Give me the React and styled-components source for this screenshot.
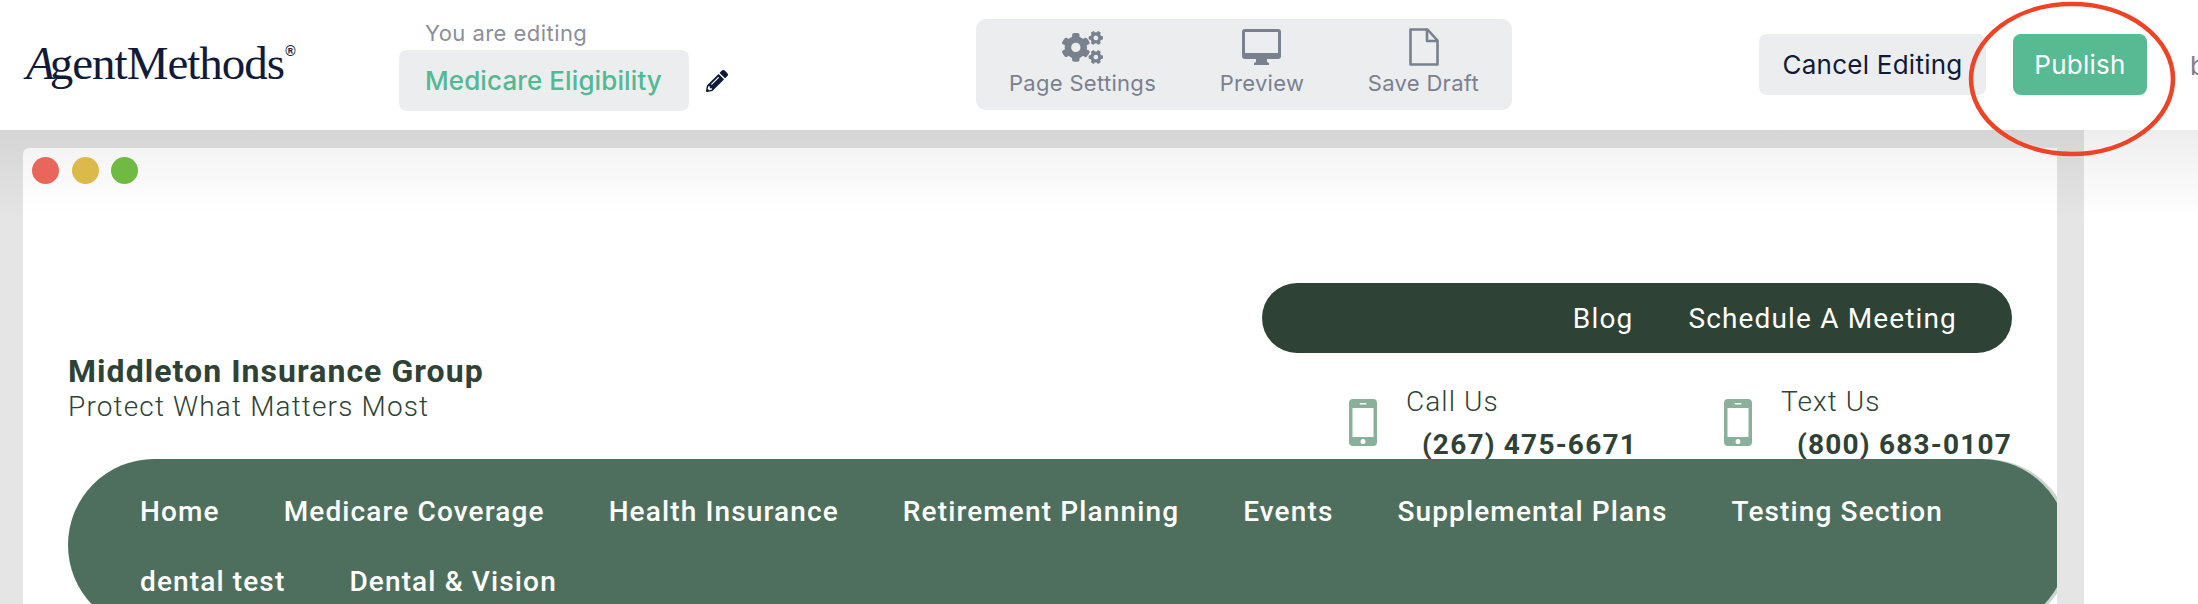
import React from 'react';
import styled, { createGlobalStyle } from 'styled-components';
import { FaCogs, FaPencilAlt } from 'react-icons/fa';

const GlobalStyle = createGlobalStyle`
  html, body {
    margin: 0;
    padding: 0;
    background: #fff;
  }
  * {
    box-sizing: border-box;
  }
`;

const Page = styled.div`
  position: relative;
  width: 2198px;
  height: 604px;
  overflow: hidden;
  font-family: Inter, 'Open Sans', sans-serif;
`;

const Header = styled.header`
  display: flex;
  align-items: center;
  height: 130px;
  padding-left: 26px;
  background: #fff;
  white-space: nowrap;

  > * {
    flex-shrink: 0;
  }
`;

const Logo = styled.div`
  width: 373px;
  margin-top: -4px;
  color: #0f1b38;
  font-family: 'Liberation Serif', serif;
  font-size: 47px;
  letter-spacing: -1px;
  display: flex;
  align-items: baseline;

  i {
    margin-right: -4px;
  }
  sup {
    font-size: 14px;
    font-family: 'Liberation Sans', sans-serif;
    font-weight: 700;
    letter-spacing: 0;
    align-self: flex-start;
    margin: 8px 0 0 1px;
    line-height: 1;
  }
`;

const Editing = styled.div`
  display: flex;
  flex-direction: column;
  align-self: flex-start;
  width: 290px;
  padding-top: 21px;
`;

const EditingLabel = styled.span`
  height: 29px;
  margin-left: 26px;
  color: #8a8f9c;
  font-size: 22px;
  line-height: 24px;
  letter-spacing: 0.45px;
`;

const PageName = styled.div`
  display: flex;
  align-items: center;
  height: 61px;
  padding-left: 26px;
  background: #ecedef;
  border-radius: 8px;
  color: #54b894;
  font-size: 26px;
  font-weight: 500;
  letter-spacing: 0.1px;
`;

const EditIcon = styled(FaPencilAlt)`
  width: 22px;
  height: 22px;
  margin: 32px 0 0 17px;
  color: #0f1b38;
`;

const Toolbar = styled.div`
  display: flex;
  align-items: flex-start;
  justify-content: space-between;
  align-self: flex-start;
  width: 536px;
  height: 91px;
  margin: 19px 0 0 248px;
  padding: 9px 33px 0;
  background: #ecedef;
  border-radius: 10px;
`;

const ToolbarItem = styled.button`
  display: flex;
  flex-direction: column;
  align-items: center;
  padding: 0;
  border: 0;
  background: none;
  color: #7a818e;
  font: inherit;
  font-size: 22px;
  line-height: 30px;
  letter-spacing: 0.3px;
`;

const IconSlot = styled.span`
  display: flex;
  align-items: center;
  justify-content: center;
  height: 38px;
  margin-bottom: 2px;

  svg {
    display: block;
  }
`;

const HeaderButton = styled.button`
  align-self: flex-start;
  height: 61px;
  margin-top: 34px;
  border: 0;
  border-radius: 8px;
  font: inherit;
  font-size: 26px;
  letter-spacing: 0.25px;
  background: ${p => (p.$primary ? '#57ba93' : '#ecedef')};
  color: ${p => (p.$primary ? '#fff' : '#0f1b38')};
  width: ${p => p.$width}px;
  margin-left: ${p => p.$gap}px;
`;

const CutOff = styled.span`
  margin-left: 43px;
  color: #7a818e;
  font-size: 26px;
`;

const Stage = styled.div`
  display: flex;
  height: 474px;
`;

const PreviewArea = styled.div`
  width: 2084px;
  height: 100%;
  padding: 18px 27px 0 23px;
  background: linear-gradient(#d5d5d5, #e5e5e5 90px);
`;

const SidePanel = styled.div`
  flex: 1;
  background: linear-gradient(#eeeeee, #ffffff 90px);
`;

const BrowserWindow = styled.div`
  height: 456px;
  overflow: hidden;
  border-radius: 6px 0 0 0;
  background: linear-gradient(#f4f4f4, #ffffff 65px);
  font-family: Roboto, sans-serif;
`;

const TitleBar = styled.div`
  display: flex;
  gap: 12.5px;
  height: 135px;
  padding: 9px 0 0 9px;
`;

const Light = styled.span`
  width: 27px;
  height: 27px;
  border-radius: 50%;
  background: ${p => p.$color};
`;

const SiteHeader = styled.div`
  display: flex;
  justify-content: space-between;
  height: 176px;
  padding: 0 45px 0 45px;
`;

const Brand = styled.div`
  padding-top: 70px;
  color: #2e4236;
  font-size: 28px;
  line-height: 36px;
  font-weight: 300;
  letter-spacing: 1.15px;
`;

const BrandName = styled.div`
  font-size: 32px;
  font-weight: 700;
  letter-spacing: 1.05px;
`;

const SiteActions = styled.div`
  width: 750px;
`;

const TopPill = styled.div`
  display: flex;
  justify-content: flex-end;
  align-items: center;
  gap: 55px;
  height: 70px;
  padding-right: 55px;
  border-radius: 35px;
  background: #2e4236;
  color: #fff;
  font-size: 28px;
  letter-spacing: 1.15px;
`;

const Contacts = styled.div`
  display: flex;
  justify-content: flex-end;
  gap: 87px;
  margin-top: 31px;
`;

const Contact = styled.div`
  display: flex;
  gap: 29px;
  color: #2e4236;
`;

const PhoneIcon = styled.svg`
  width: 28px;
  height: 47px;
  margin-top: 15px;
`;

const ContactLabel = styled.div`
  font-size: 28px;
  font-weight: 300;
  line-height: 36px;
  letter-spacing: 1.1px;
`;

const ContactNumber = styled.div`
  margin: 7px 0 0 16px;
  font-size: 28px;
  font-weight: 700;
  line-height: 36px;
  letter-spacing: 1.2px;
  white-space: nowrap;
`;

const SiteNav = styled.nav`
  position: relative;
  display: flex;
  flex-wrap: wrap;
  align-content: flex-start;
  column-gap: 64px;
  width: 2000px;
  height: 172px;
  margin-left: 45px;
  padding: 18px 72px 0;
  border-radius: 86px;
  background: #4f6f5e;
  box-shadow: 4px 0 0 #c9d6ce;
  color: #fff;
  font-size: 28px;
  font-weight: 500;
  line-height: 70px;
  letter-spacing: 1.13px;
`;

const Annotation = styled.svg`
  position: absolute;
  left: 1968px;
  top: 0;
  width: 208px;
  height: 158px;
  pointer-events: none;
`;

const navItems = [
  'Home',
  'Medicare Coverage',
  'Health Insurance',
  'Retirement Planning',
  'Events',
  'Supplemental Plans',
  'Testing Section',
  'dental test',
  'Dental & Vision',
];

const Phone = () => (
  <PhoneIcon viewBox="0 0 28 47">
    <rect width="28" height="47" rx="4" fill="#8ab09b" />
    <rect x="3.5" y="9" width="21" height="29" fill="#fff" />
    <rect x="10.5" y="4" width="7" height="1.6" rx="0.8" fill="#fff" />
    <ellipse cx="14" cy="42.5" rx="2.4" ry="2.6" fill="#fff" />
  </PhoneIcon>
);

const MonitorIcon = () => (
  <svg width="39" height="36" viewBox="0 0 39 36" fill="#7a818e">
    <path d="M3 0h33a3 3 0 0 1 3 3v24a3 3 0 0 1-3 3H25v3l2 1v2H12v-2l2-1v-3H3a3 3 0 0 1-3-3V3a3 3 0 0 1 3-3zm0 3v21h33V3H3z" fillRule="evenodd" />
  </svg>
);

const DraftIcon = () => (
  <svg width="31" height="38" viewBox="0 0 31 38" fill="none" stroke="#7a818e" strokeWidth="2.6" strokeLinejoin="round">
    <path d="M2.5 1.5h17l10 11v24h-27z" />
    <path d="M19 2v11h10.5" />
  </svg>
);

export default function App() {
  return (
    <Page>
      <GlobalStyle />
      <Header>
        <Logo>
          <span><i>A</i>gentMethods</span>
          <sup>®</sup>
        </Logo>
        <Editing>
          <EditingLabel>You are editing</EditingLabel>
          <PageName>Medicare Eligibility</PageName>
        </Editing>
        <EditIcon />
        <Toolbar>
          <ToolbarItem><IconSlot><FaCogs size={41} /></IconSlot>Page Settings</ToolbarItem>
          <ToolbarItem><IconSlot><MonitorIcon /></IconSlot>Preview</ToolbarItem>
          <ToolbarItem><IconSlot><DraftIcon /></IconSlot>Save Draft</ToolbarItem>
        </Toolbar>
        <HeaderButton $width={227} $gap={247}>Cancel Editing</HeaderButton>
        <HeaderButton $primary $width={134} $gap={27}>Publish</HeaderButton>
        <CutOff>b</CutOff>
      </Header>
      <Stage>
        <PreviewArea>
          <BrowserWindow>
            <TitleBar>
              <Light $color="#e9665a" />
              <Light $color="#dcb94b" />
              <Light $color="#6fba43" />
            </TitleBar>
            <SiteHeader>
              <Brand>
                <BrandName>Middleton Insurance Group</BrandName>
                Protect What Matters Most
              </Brand>
              <SiteActions>
                <TopPill>
                  <span>Blog</span>
                  <span>Schedule A Meeting</span>
                </TopPill>
                <Contacts>
                  <Contact>
                    <Phone />
                    <div>
                      <ContactLabel>Call Us</ContactLabel>
                      <ContactNumber>(267) 475-6671</ContactNumber>
                    </div>
                  </Contact>
                  <Contact>
                    <Phone />
                    <div>
                      <ContactLabel>Text Us</ContactLabel>
                      <ContactNumber>(800) 683-0107</ContactNumber>
                    </div>
                  </Contact>
                </Contacts>
              </SiteActions>
            </SiteHeader>
            <SiteNav>
              {navItems.map(item => (
                <span key={item}>{item}</span>
              ))}
            </SiteNav>
          </BrowserWindow>
        </PreviewArea>
        <SidePanel />
      </Stage>
      <Annotation viewBox="0 0 208 158">
        <ellipse cx="104" cy="79" rx="101" ry="75" fill="none" stroke="#ee4325" strokeWidth="4.5" />
      </Annotation>
    </Page>
  );
}
